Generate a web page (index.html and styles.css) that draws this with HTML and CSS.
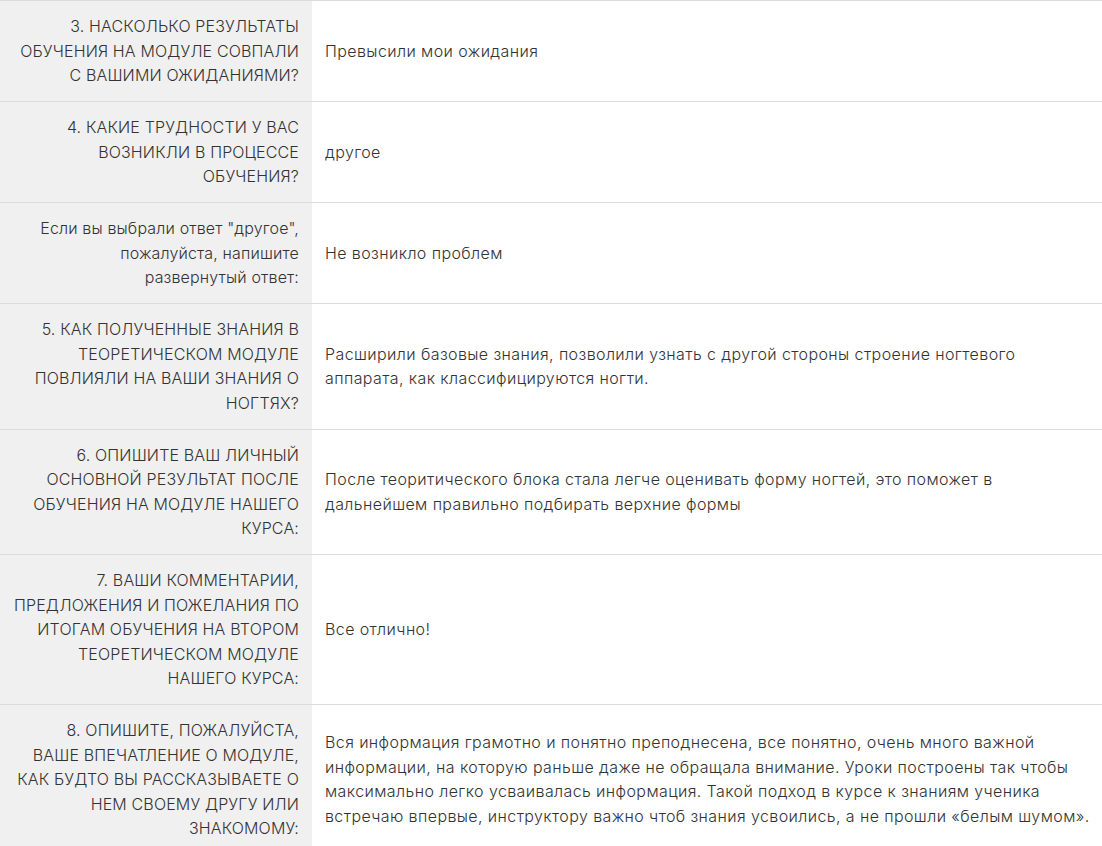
FILE: index.html
```html
<!DOCTYPE html>
<html lang="ru">
<head>
<meta charset="utf-8">
<title>Анкета</title>
<link rel="stylesheet" href="styles.css">
</head>
<body>
<table class="answers">
  <tbody>
    <tr>
      <th class="q">3. НАСКОЛЬКО РЕЗУЛЬТАТЫ<br>ОБУЧЕНИЯ НА МОДУЛЕ СОВПАЛИ<br>С ВАШИМИ ОЖИДАНИЯМИ?</th>
      <td class="a">Превысили мои ожидания</td>
    </tr>
    <tr>
      <th class="q">4. КАКИЕ ТРУДНОСТИ У ВАС<br>ВОЗНИКЛИ В ПРОЦЕССЕ<br>ОБУЧЕНИЯ?</th>
      <td class="a">другое</td>
    </tr>
    <tr>
      <th class="q">Если вы выбрали ответ "другое",<br>пожалуйста, напишите<br>развернутый ответ:</th>
      <td class="a">Не возникло проблем</td>
    </tr>
    <tr>
      <th class="q">5. КАК ПОЛУЧЕННЫЕ ЗНАНИЯ В<br>ТЕОРЕТИЧЕСКОМ МОДУЛЕ<br>ПОВЛИЯЛИ НА ВАШИ ЗНАНИЯ О<br>НОГТЯХ?</th>
      <td class="a">Расширили базовые знания, позволили узнать с другой стороны строение ногтевого аппарата, как классифицируются ногти.</td>
    </tr>
    <tr>
      <th class="q">6. ОПИШИТЕ ВАШ ЛИЧНЫЙ<br>ОСНОВНОЙ РЕЗУЛЬТАТ ПОСЛЕ<br>ОБУЧЕНИЯ НА МОДУЛЕ НАШЕГО<br>КУРСА:</th>
      <td class="a">После теоритического блока стала легче оценивать форму ногтей, это поможет в дальнейшем правильно подбирать верхние формы</td>
    </tr>
    <tr>
      <th class="q">7. ВАШИ КОММЕНТАРИИ,<br>ПРЕДЛОЖЕНИЯ И ПОЖЕЛАНИЯ ПО<br>ИТОГАМ ОБУЧЕНИЯ НА ВТОРОМ<br>ТЕОРЕТИЧЕСКОМ МОДУЛЕ<br>НАШЕГО КУРСА:</th>
      <td class="a">Все отлично!</td>
    </tr>
    <tr>
      <th class="q">8. ОПИШИТЕ, ПОЖАЛУЙСТА,<br>ВАШЕ ВПЕЧАТЛЕНИЕ О МОДУЛЕ,<br>КАК БУДТО ВЫ РАССКАЗЫВАЕТЕ О<br>НЕМ СВОЕМУ ДРУГУ ИЛИ<br>ЗНАКОМОМУ:</th>
      <td class="a">Вся информация грамотно и понятно преподнесена, все понятно, очень много важной информации, на которую раньше даже не обращала внимание. Уроки построены так чтобы максимально легко усваивалась информация. Такой подход в курсе к знаниям ученика встречаю впервые, инструктору важно чтоб знания усвоились, а не прошли «белым шумом».</td>
    </tr>
  </tbody>
</table>
</body>
</html>
```
FILE: styles.css
```css
html, body {
  margin: 0;
  padding: 0;
  background: #ffffff;
}
body {
  font-family: Inter, "Noto Sans", sans-serif;
  font-size: 16px;
  font-weight: 300;
  line-height: 24.5px;
  color: #333333;
}
.answers {
  width: 1102px;
  border-collapse: collapse;
  border-top: 1px solid #dcdcdc;
}
.answers tr {
  border-bottom: 1px solid #dcdcdc;
}
.q {
  width: 289px;
  background: #f0f0f0;
  text-align: right;
  font-weight: 300;
  letter-spacing: 0.15px;
  padding: 13px 13px 13.5px 10px;
  vertical-align: middle;
}
.a {
  text-align: left;
  letter-spacing: 0.4px;
  padding: 13px 8px 13.5px 13px;
  vertical-align: middle;
}
```
